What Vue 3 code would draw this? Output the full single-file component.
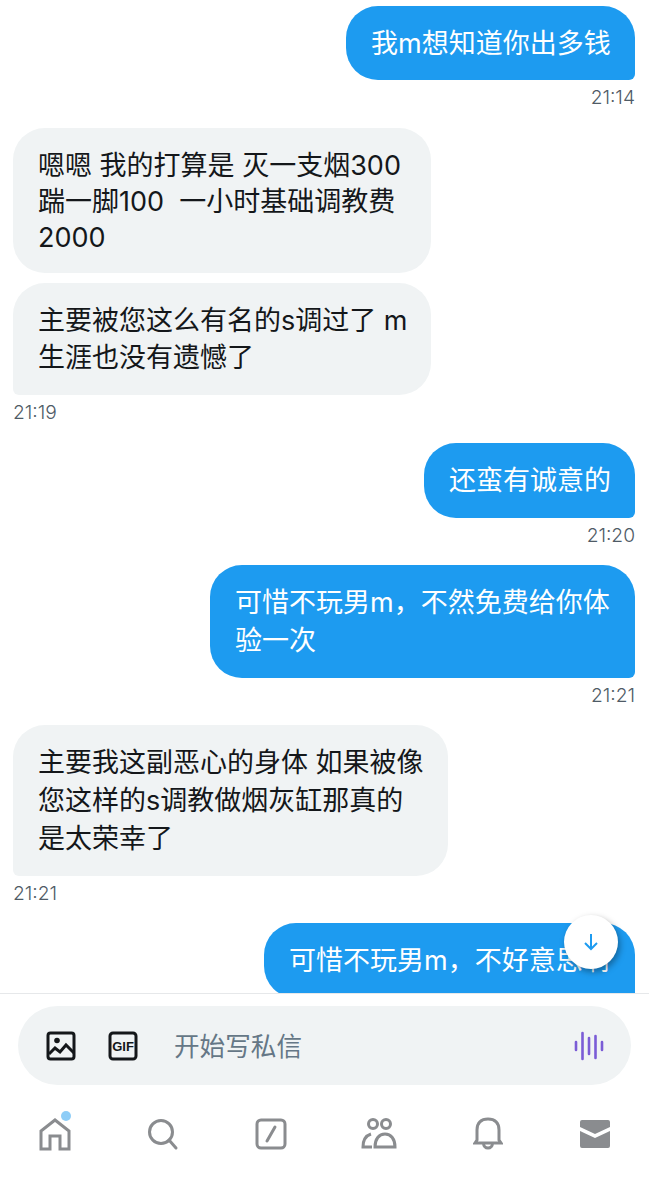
<template>
  <div class="page">
    <div class="chat">
      <div
        v-for="(msg, i) in messages"
        :key="i"
        class="msg"
        :class="[msg.mine ? 'mine' : 'theirs', { grouped: msg.grouped, tail: msg.time }]"
      >
        <div class="bubble" :class="{ tight: msg.tight }" :style="{ width: msg.width + 'px' }">
          <div v-for="line in msg.lines" :key="line">{{ line }}</div>
        </div>
        <div v-if="msg.time" class="time">{{ msg.time }}</div>
      </div>
    </div>

    <button class="to-bottom">
      <svg width="22" height="22" viewBox="0 0 22 22" fill="none" stroke="#1d9bf0" stroke-width="2">
        <path d="M11 3v15M5 12l6 6 6-6" />
      </svg>
    </button>

    <div class="composer">
      <div class="input">
        <svg class="tool" width="30" height="30" viewBox="0 0 30 30" fill="none" stroke="#14171a" stroke-width="3">
          <rect x="2" y="2" width="26" height="26" rx="2.5" />
          <circle cx="11" cy="9.5" r="2.8" fill="#14171a" stroke="none" />
          <path d="M3 23l6-6 5 4 6-7 8 8" />
        </svg>
        <svg class="tool gif" width="30" height="30" viewBox="0 0 30 30">
          <rect x="2" y="2" width="26" height="26" rx="3" fill="none" stroke="#14171a" stroke-width="3" />
          <text x="15" y="19.700" text-anchor="middle" class="gif-text">GIF</text>
        </svg>
        <span class="placeholder">开始写私信</span>
        <svg class="voice" width="30" height="30" viewBox="0 0 30 30" stroke="#7b5cd6" stroke-width="2.6" stroke-linecap="round">
          <path d="M2 11v8M8.500 2v26M15 7v16M21.500 5v22M28 11v8" />
        </svg>
      </div>
    </div>

    <nav class="tabs">
      <div class="tab">
        <svg width="34" height="36" viewBox="0 0 34 36" fill="none" stroke="#8a8c8f" stroke-width="3">
          <path d="M3 33V15L17 4l14 11v18h-9V20H12v13z" />
        </svg>
        <span class="dot"></span>
      </div>
      <div class="tab">
        <svg width="34" height="34" viewBox="0 0 34 34" fill="none" stroke="#8a8c8f" stroke-width="3">
          <circle cx="15" cy="15" r="11.500" />
          <path d="M23 23l7 8" stroke-linecap="round" />
        </svg>
      </div>
      <div class="tab">
        <svg width="32" height="32" viewBox="0 0 32 32" fill="none" stroke="#8a8c8f" stroke-width="3">
          <rect x="2" y="2" width="28" height="28" rx="4" />
          <path d="M20 9l-8 14" stroke-linecap="round" />
        </svg>
      </div>
      <div class="tab">
        <svg width="36" height="32" viewBox="0 0 36 32" fill="none" stroke="#8a8c8f" stroke-width="3">
          <circle cx="12" cy="6" r="4.500" />
          <circle cx="25" cy="6" r="4.500" />
          <path d="M11 29H2c0-6 2-11 8-13" />
          <path d="M14 29c0-8 4-13 10-13s10 5 10 13z" />
        </svg>
      </div>
      <div class="tab">
        <svg class="bell" width="30" height="34" viewBox="0 0 30 34" fill="none" stroke="#8a8c8f" stroke-width="3">
          <path d="M2 26l2-3V13C4 6 8 2 15 2s11 4 11 11v10l2 3z" />
          <path d="M10.500 26c0 3 2 5 4.500 5s4.500-2 4.500-5" />
        </svg>
      </div>
      <div class="tab">
        <svg width="30" height="28" viewBox="0 0 30 28">
          <path fill="#8a8c8f" d="M2 0h26a2 2 0 0 1 2 2v5L15 14 0 7V2a2 2 0 0 1 2-2zM0 11l15 7 15-7v15a2 2 0 0 1-2 2H2a2 2 0 0 1-2-2z" />
        </svg>
      </div>
    </nav>
  </div>
</template>

<script setup>
const messages = [
  { mine: true, width: 289, lines: ['我m想知道你出多钱'], time: '21:14' },
  { mine: false, width: 418, tight: true, grouped: true, lines: ['嗯嗯 我的打算是 灭一支烟300', '踹一脚100  一小时基础调教费', '2000'] },
  { mine: false, width: 418, lines: ['主要被您这么有名的s调过了 m', '生涯也没有遗憾了'], time: '21:19' },
  { mine: true, width: 211, lines: ['还蛮有诚意的'], time: '21:20' },
  { mine: true, width: 425, lines: ['可惜不玩男m，不然免费给你体', '验一次'], time: '21:21' },
  { mine: false, width: 435, lines: ['主要我这副恶心的身体 如果被像', '您这样的s调教做烟灰缸那真的', '是太荣幸了'], time: '21:21' },
  { mine: true, width: 371, lines: ['可惜不玩男m，不好意思啊'] }
]
</script>

<style>
body {
  background: #fff;
}
</style>

<style scoped>
.page {
  position: relative;
  width: 649px;
  height: 1200px;
  overflow: hidden;
  background: #fff;
  font-family: Inter, "Noto Sans CJK SC", sans-serif;
}
.chat {
  height: 987.500px;
  padding: 5.500px 14px 0 13px;
  overflow: hidden;
}
.msg {
  display: flex;
  flex-direction: column;
  margin-bottom: 19.500px;
}
.msg.grouped {
  margin-bottom: 9.500px;
}
.msg.mine {
  align-items: flex-end;
}
.msg.theirs {
  align-items: flex-start;
}
.bubble {
  box-sizing: border-box;
  padding: 19px 25px 18.200px;
  border-radius: 32px;
  font-size: 27px;
  font-weight: 400;
  line-height: 37.750px;
  white-space: pre;
}
.bubble.tight {
  padding: 20.500px 25px 16.700px;
  line-height: 36px;
}
.mine .bubble {
  background: #1d9bf0;
  color: #fff;
  border-bottom-right-radius: 6px;
}
.theirs .bubble {
  background: #f0f3f4;
  color: #14171a;
}
.theirs.tail .bubble {
  border-bottom-left-radius: 6px;
}
.time {
  margin-top: 7px;
  font-size: 19.200px;
  font-weight: 300;
  line-height: 21px;
  color: #4f5b66;
}
.to-bottom {
  position: absolute;
  left: 564px;
  top: 915px;
  width: 54px;
  height: 54px;
  display: flex;
  align-items: center;
  justify-content: center;
  padding: 0;
  border: none;
  border-radius: 50%;
  background: #fff;
  box-shadow: 2px 3px 6px rgba(0, 0, 0, 0.35);
}
.composer {
  border-top: 1px solid #e6e8ea;
  padding: 12px 18px 0;
}
.input {
  display: flex;
  align-items: center;
  height: 79px;
  padding: 0 27px 0 28px;
  border-radius: 40px;
  background: #f0f3f4;
}
.tool {
  margin-right: 32px;
}
.gif {
  margin-right: 36px;
}
.gif-text {
  font-family: "Liberation Sans", sans-serif;
  font-size: 13px;
  font-weight: 700;
  fill: #14171a;
}
.placeholder {
  flex: 1;
  padding-bottom: 3px;
  font-size: 25.600px;
  font-weight: 400;
  color: #657786;
}
.tabs {
  display: flex;
  margin-top: 31px;
  padding-left: 1px;
}
.tab {
  position: relative;
  width: 108.600px;
  height: 36px;
  display: flex;
  align-items: center;
  justify-content: center;
}
.bell {
  margin-left: 2px;
}
.dot {
  position: absolute;
  left: 60px;
  top: -5px;
  width: 10px;
  height: 10px;
  border-radius: 50%;
  background: #8ecdf7;
}
</style>
